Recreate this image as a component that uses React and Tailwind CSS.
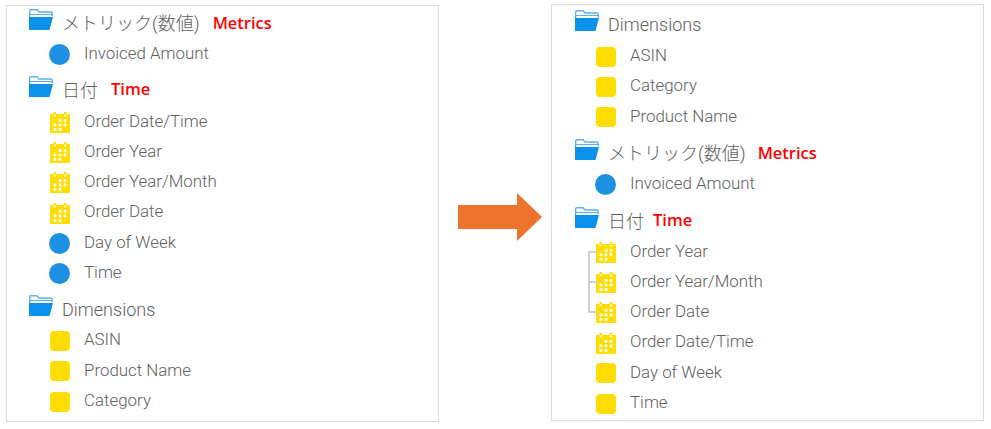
import React from 'react';

const leftRows = [
  { type: 'folder', label: 'メトリック(数値)', note: 'Metrics', mt: 'mt-0', noteGap: 'ml-[13px]' },
  { type: 'circle', label: 'Invoiced Amount' },
  { type: 'folder', label: '日付', note: 'Time', mt: 'mt-[6px]', noteGap: 'ml-[13px]' },
  { type: 'cal', label: 'Order Date/Time', mt: 'mt-[1px]' },
  { type: 'cal', label: 'Order Year' },
  { type: 'cal', label: 'Order Year/Month' },
  { type: 'cal', label: 'Order Date' },
  { type: 'circle', label: 'Day of Week' },
  { type: 'circle', label: 'Time' },
  { type: 'folder', label: 'Dimensions', mt: 'mt-[7px]' },
  { type: 'square', label: 'ASIN' },
  { type: 'square', label: 'Product Name' },
  { type: 'square', label: 'Category' },
];

const rightRows = [
  { type: 'folder', label: 'Dimensions' },
  { type: 'square', label: 'ASIN', mt: 'mt-[1px]' },
  { type: 'square', label: 'Category' },
  { type: 'square', label: 'Product Name' },
  { type: 'folder', label: 'メトリック(数値)', note: 'Metrics', mt: 'mt-[7px]', noteGap: 'ml-[12px]' },
  { type: 'circle', label: 'Invoiced Amount' },
  { type: 'folder', label: '日付', note: 'Time', mt: 'mt-[7px]', noteGap: 'ml-[9px]' },
  { type: 'cal', label: 'Order Year', tree: 'first' },
  { type: 'cal', label: 'Order Year/Month', tree: 'mid' },
  { type: 'cal', label: 'Order Date', tree: 'last' },
  { type: 'cal', label: 'Order Date/Time' },
  { type: 'square', label: 'Day of Week' },
  { type: 'square', label: 'Time' },
];

function FolderIcon() {
  return (
    <svg width="24" height="21" viewBox="0 0 24 21" className="shrink-0 -mt-[7px]">
      <path d="M0.7 20 V1.7 Q0.7 0.7 1.7 0.7 H8 L10 3 H22 Q23.2 3 23.2 4 V7" fill="none" stroke="#5db0f0" strokeWidth="1.4" />
      <path d="M1 5.5 H23 V7" fill="none" stroke="#5db0f0" strokeWidth="1" />
      <path d="M0 21 V8 H24 L20.5 21 Z" fill="#0a92ea" />
    </svg>
  );
}

function CalendarIcon() {
  const dots = [
    [10, 7], [15, 7],
    [5, 11.5], [10, 11.5], [15, 11.5],
    [5, 16], [10, 16],
  ];
  return (
    <svg width="20" height="21" viewBox="0 0 20 21" className="shrink-0 mt-[3px]">
      <path d="M0 2 H3.5 V0 H6 V2 H14 V0 H16.5 V2 H20 V21 H0 Z" fill="#ffdd00" />
      <rect x="3.5" y="2.5" width="2.5" height="2" fill="#fff" opacity="0.8" />
      <rect x="14" y="2.5" width="2.5" height="2" fill="#fff" opacity="0.8" />
      {dots.map(([x, y]) => (
        <rect key={`${x}-${y}`} x={x - 1.4} y={y} width="2.8" height="2.8" fill="#fff" />
      ))}
    </svg>
  );
}

function RowIcon({ type }) {
  if (type === 'circle') return <span className="shrink-0 w-[21px] h-[21px] -ml-px mt-[3px] rounded-full bg-[#1e90e4]" />;
  if (type === 'cal') return <CalendarIcon />;
  return <span className="shrink-0 w-[20px] h-[20px] mt-[3px] rounded-[4px] bg-[#ffdd00]" />;
}

function Row({ row }) {
  const { type, label, note, mt = 'mt-0', noteGap, tree } = row;
  if (type === 'folder') {
    return (
      <div className={`${mt} h-[30.25px] flex items-center pl-[22px]`}>
        <FolderIcon />
        <span className="ml-[9px] mt-[1px] text-[18px] font-light text-[#606060] font-['Roboto','Noto_Sans_CJK_JP',sans-serif]">{label}</span>
        {note && <span className={`${noteGap} text-[16.5px] font-semibold text-[#f00] font-['Open_Sans',sans-serif]`}>{note}</span>}
      </div>
    );
  }
  return (
    <div className={`${mt} relative h-[30.25px] flex items-center pl-[43px]`}>
      {tree && <span className="absolute left-[35px] w-[9px] top-[15px] h-[2px] bg-[#d0d0d0]" />}
      {tree === 'first' && <span className="absolute left-[35px] w-[2px] top-[15px] bottom-0 bg-[#d0d0d0]" />}
      {tree === 'mid' && <span className="absolute left-[35px] w-[2px] top-0 bottom-0 bg-[#d0d0d0]" />}
      {tree === 'last' && <span className="absolute left-[35px] w-[2px] top-0 h-[17px] bg-[#d0d0d0]" />}
      <RowIcon type={type} />
      <span className="ml-[14px] mt-[1px] text-[16.9px] font-light text-[#606060] font-['Roboto',sans-serif]">{label}</span>
    </div>
  );
}

function Panel({ rows, className }) {
  return (
    <div className={`w-[433px] h-[417px] shrink-0 border border-[#dcdcdc] bg-white ${className}`}>
      {rows.map((row, i) => (
        <Row key={i} row={row} />
      ))}
    </div>
  );
}

export default function App() {
  return (
    <div className="w-[991px] h-[429px] bg-white flex pl-[6px] overflow-hidden">
      <Panel rows={leftRows} className="mt-[5px] pt-[2px]" />
      <div className="w-[112px] shrink-0 pl-[19px] pt-[193px]">
        <svg width="84" height="48" viewBox="0 0 84 48">
          <path d="M0 12 H59 V0 L84 24 L59 48 V36 H0 Z" fill="#ed722c" />
        </svg>
      </div>
      <Panel rows={rightRows} className="mt-[4px] pt-[4px] pl-[1px]" />
    </div>
  );
}
